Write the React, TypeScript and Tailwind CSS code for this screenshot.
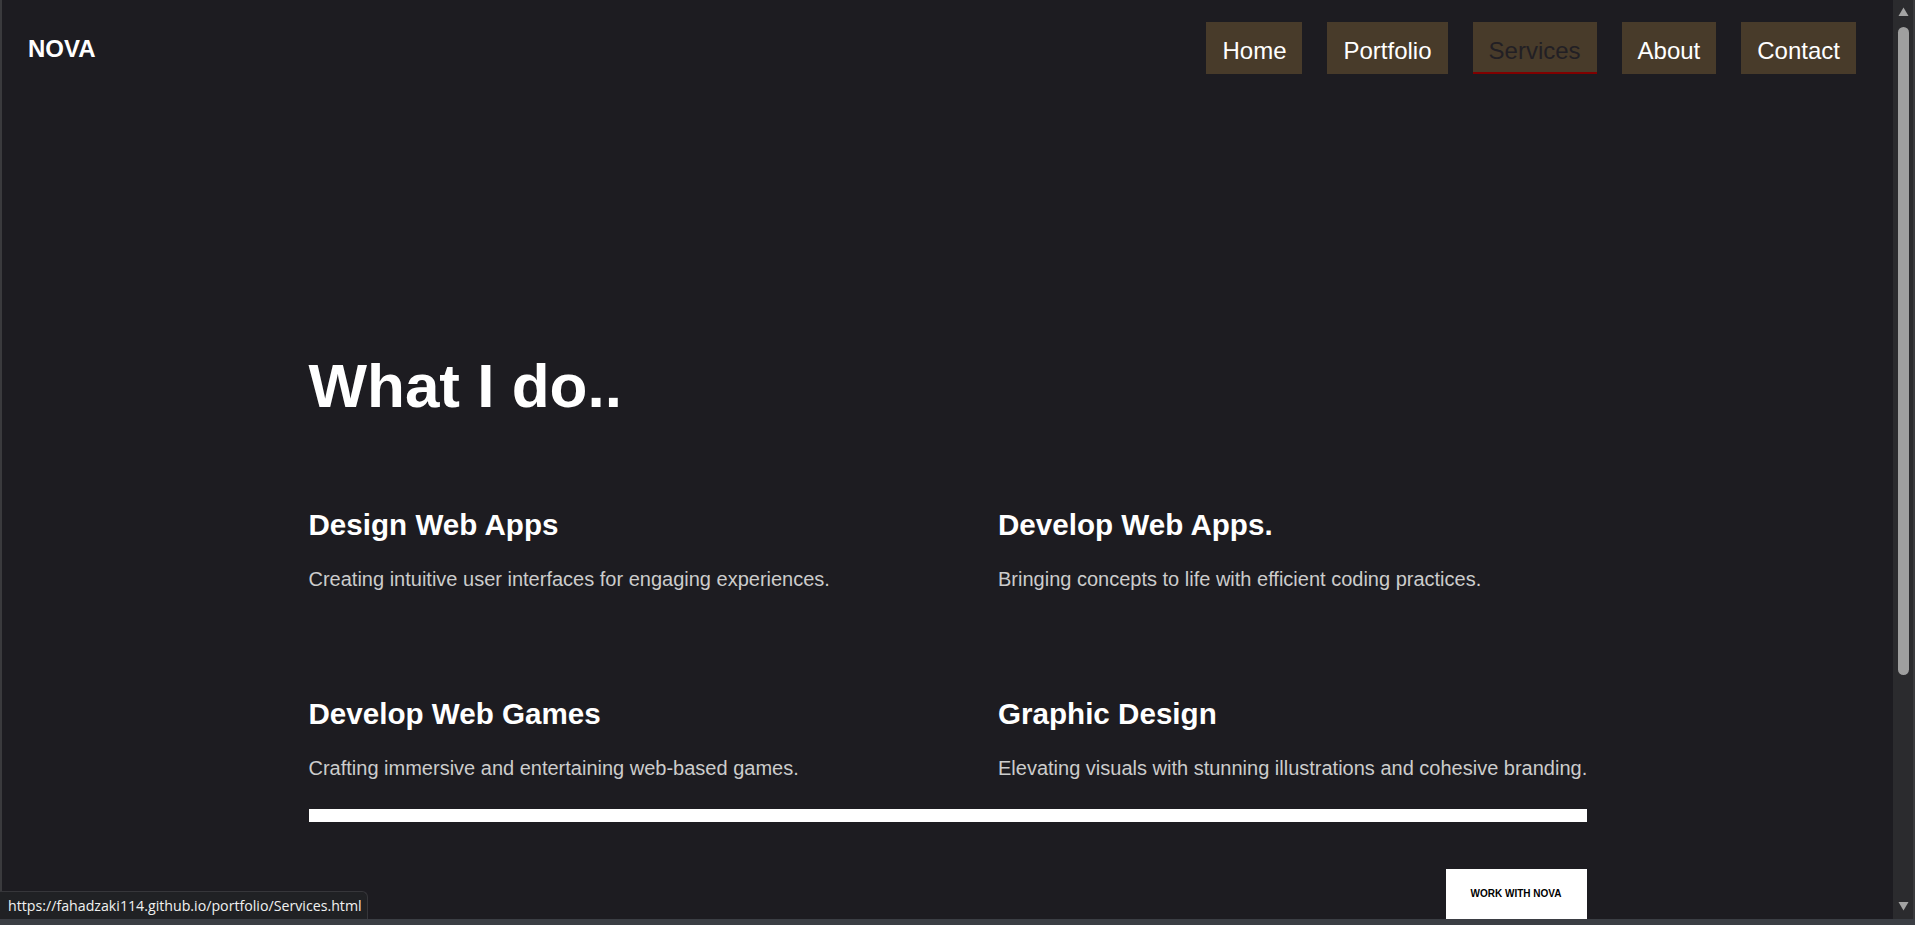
import React from 'react';

const navLinks = ['Home', 'Portfolio', 'Services', 'About', 'Contact'];

const services = [
  { title: 'Design Web Apps', text: 'Creating intuitive user interfaces for engaging experiences.' },
  { title: 'Develop Web Apps.', text: 'Bringing concepts to life with efficient coding practices.' },
  { title: 'Develop Web Games', text: 'Crafting immersive and entertaining web-based games.' },
  { title: 'Graphic Design', text: 'Elevating visuals with stunning illustrations and cohesive branding.' },
];

function Scrollbar() {
  return (
    <div className="w-[20px] h-full bg-[#2b2b2e] flex flex-col items-center">
      {/* up arrow */}
      <svg width="11" height="10" viewBox="0 0 11 10" className="mt-[7px]">
        <path d="M5.5 0.5 L10.5 9 L0.5 9 Z" fill="#a3a3a3" />
      </svg>
      <div className="mt-[10px] w-[11px] h-[648px] rounded-full bg-[#9f9f9f]" />
      <div className="flex-1" />
      <svg width="11" height="10" viewBox="0 0 11 10" className="mb-[8px]">
        <path d="M0.5 1 L10.5 1 L5.5 9.5 Z" fill="#a3a3a3" />
      </svg>
    </div>
  );
}

export default function App() {
  return (
    <div
      className="relative h-[925px] w-full overflow-hidden bg-[#3b3e44] flex flex-col"
      style={{ fontFamily: '"Liberation Sans", Arial, sans-serif' }}
    >
      <div className="flex h-[919px]">
        <div className="w-[2px] h-full bg-[#3a3a3d]" />

        <main className="flex-1 h-full bg-[#1d1c21] overflow-hidden">
          {/* Header */}
          <header className="h-[96px] flex items-center justify-between pl-[26px] pr-[37px]">
            <div className="mt-[2px] text-white font-bold text-[24px] leading-none">NOVA</div>
            <nav className="flex gap-[25px]">
              {navLinks.map((link) => (
                <a
                  key={link}
                  href="#"
                  className={`block h-[52px] px-4 pt-[15px] bg-[#483b2a] text-[24px] leading-[28px] ${
                    link === 'Services'
                      ? 'text-[#221f24] border-b-[2px] border-[#800000]'
                      : 'text-white'
                  }`}
                >
                  {link}
                </a>
              ))}
            </nav>
          </header>

          {/* Services */}
          <section className="w-[1278px] mx-auto pt-[254px]">
            <h1 className="text-white font-bold text-[62px] leading-[72px]">What I do..</h1>

            <div className="mt-[86px] grid grid-cols-2 gap-x-[101px] gap-y-[106px]">
              {services.map((s) => (
                <div key={s.title}>
                  <h2 className="text-white font-bold text-[29.6px] leading-[34px]">{s.title}</h2>
                  <p className="mt-[25px] text-[#cccccc] text-[20px] leading-[24px] whitespace-nowrap">
                    {s.text}
                  </p>
                </div>
              ))}
            </div>

            <div className="mt-[29px] h-[13px] bg-white" />

            <div className="flex justify-end mt-[47px]">
              <button className="bg-white text-black font-bold text-[10px] leading-[12px] px-[25px] py-[19px]">
                WORK WITH NOVA
              </button>
            </div>
          </section>
        </main>

        <Scrollbar />
        <div className="w-[2px] h-full bg-[#3a3a3d]" />
      </div>

      {/* browser status bubble */}
      <div
        className="absolute left-0 bottom-[6px] h-[28px] w-[368px] bg-[#202124] border-t border-r border-[#36363a] rounded-tr-[6px] flex items-center pl-[8px] text-[#f1f1f1] text-[14.2px]"
        style={{ fontFamily: '"Open Sans", "Noto Sans", sans-serif' }}
      >
        https://fahadzaki114.github.io/portfolio/Services.html
      </div>
    </div>
  );
}
